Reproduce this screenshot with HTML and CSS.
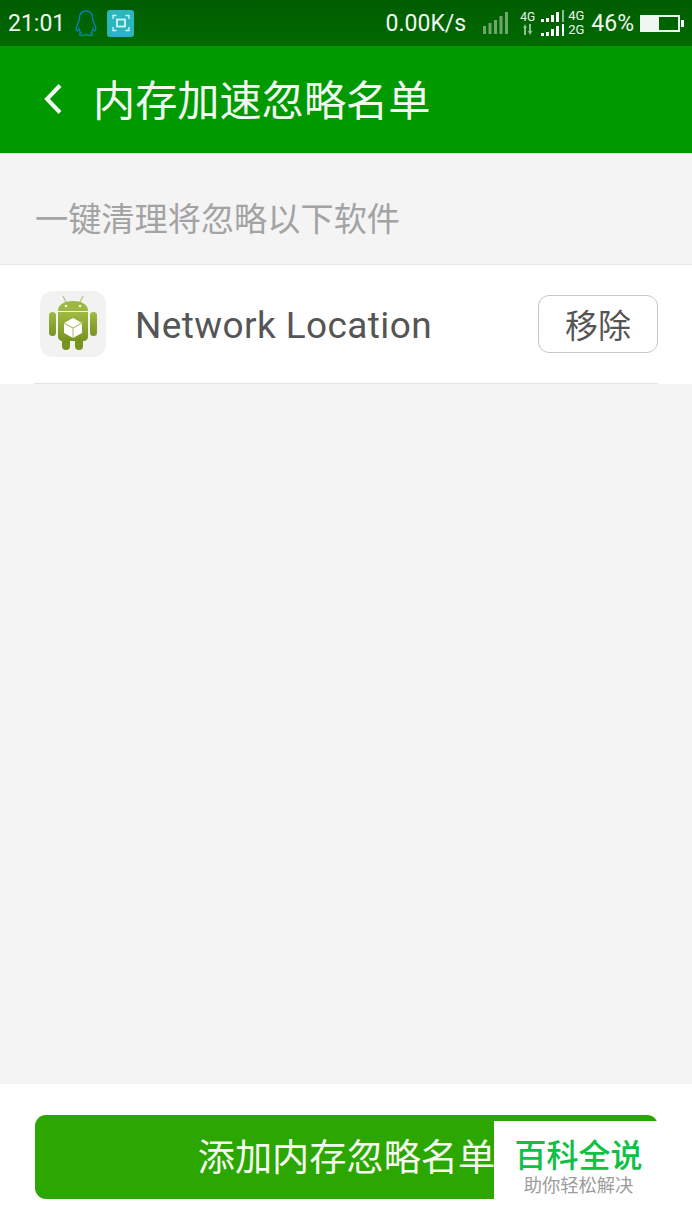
FILE: index.html
```html
<!DOCTYPE html>
<html lang="zh-CN">
<head>
  <meta charset="UTF-8">
  <meta name="viewport" content="width=device-width, initial-scale=1.0">
  <title>内存加速忽略名单</title>
  <link rel="stylesheet" href="styles.css">
</head>
<body>
  <div class="status-bar">
    <span class="clock">21:01</span>
    <svg class="qq-icon" width="24" height="28" viewBox="0 0 24 28" fill="none" stroke="#0a7fb0" stroke-width="1.5">
      <path d="M12 2C7.5 2 5.5 5.5 5.5 9.5C5.5 11 5 12 3.8 14.5C2.5 17.5 1.5 20.5 2.8 21.5C3.6 22 4.5 21 5 20C5.3 22 6 23 7 24C5.5 24.5 5 25.5 6 26C7.5 26.7 10.5 26.5 12 25.3C13.500 26.500 16.500 26.700 18 26C19 25.500 18.500 24.500 17 24C18 23 18.700 22 19 20C19.500 21 20.400 22 21.200 21.500C22.500 20.500 21.500 17.500 20.200 14.500C19 12 18.500 11 18.500 9.500C18.500 5.500 16.500 2 12 2Z"/>
    </svg>
    <span class="scan-icon">
      <svg width="20" height="20" viewBox="0 0 20 20" fill="none" stroke="#d8f4f4" stroke-width="1.3">
        <path d="M2 6V2.500H5.500M14.500 2.500H18V6M18 14V17.500H14.500M5.500 17.500H2V14"/>
        <rect x="6" y="6.500" width="8" height="7" stroke-width="1.800"/>
      </svg>
    </span>
    <span class="speed">0.00K/s</span>
    <svg class="signal-main" width="26" height="24" viewBox="0 0 26 24" fill="#6fa66f">
      <rect x="0" y="15" width="3" height="8"/>
      <rect x="5.500" y="12" width="3" height="11"/>
      <rect x="11" y="9" width="3" height="14"/>
      <rect x="16.500" y="5" width="3" height="18"/>
      <rect x="22" y="1" width="3" height="22"/>
    </svg>
    <span class="net-label">
      <span>4G</span>
      <svg width="12" height="11" viewBox="0 0 12 11" fill="#8fbf8f"><path d="M3 0L5 4H4V11H2V4H1ZM7 0H9V7H10.500L8 11L5.800 7H7Z"/></svg>
    </span>
    <span class="sim-block">
      <span class="sim-row">
        <svg width="24" height="13" viewBox="0 0 24 13" fill="#fff"><rect x="0" y="9" width="3" height="3"/><rect x="5" y="8" width="3" height="4"/><rect x="10" y="5" width="3" height="7"/><rect x="15" y="2" width="3" height="10"/><rect x="21" y="0" width="2" height="12" fill="#8fbf8f"/></svg>
        <span>4G</span>
      </span>
      <span class="sim-row">
        <svg width="24" height="13" viewBox="0 0 24 13" fill="#fff"><rect x="0" y="9" width="3" height="3"/><rect x="5" y="8" width="3" height="4"/><rect x="10" y="5" width="3" height="7"/><rect x="15" y="2" width="3" height="10"/><rect x="21" y="0" width="2" height="12"/></svg>
        <span>2G</span>
      </span>
    </span>
    <span class="battery-pct">46%</span>
    <span class="battery"><span class="battery-fill"></span></span>
  </div>

  <header class="title-bar">
    <svg class="back-icon" width="20" height="32" viewBox="0 0 20 32" fill="none" stroke="#f2fbf2" stroke-width="4">
      <path d="M17 2.500L4 16L17 29.500"/>
    </svg>
    <h1>内存加速忽略名单</h1>
  </header>

  <div class="section-label">一键清理将忽略以下软件</div>

  <div class="app-list">
    <div class="app-row">
      <span class="app-icon">
        <svg width="50" height="58" viewBox="0 0 50 58">
          <defs>
            <linearGradient id="droid" x1="0" y1="0" x2="0" y2="1">
              <stop offset="0" stop-color="#a0b944"/>
              <stop offset="1" stop-color="#76941f"/>
            </linearGradient>
          </defs>
          <path d="M15 1L18 7M35 1L32 7" stroke="#b4c48c" stroke-width="1.300" fill="none"/>
          <path d="M10 16C10 9 17 6 25 6C33 6 40 9 40 16Z" fill="#9db742"/>
          <circle cx="18" cy="11" r="1.300" fill="#f4f6e6"/>
          <circle cx="32" cy="11" r="1.300" fill="#f4f6e6"/>
          <rect x="1" y="17" width="7" height="24" rx="3.500" fill="url(#droid)"/>
          <rect x="42" y="17" width="7" height="24" rx="3.500" fill="url(#droid)"/>
          <path d="M10 17H40V42C40 44 38 46 36 46H14C12 46 10 44 10 42Z" fill="url(#droid)"/>
          <rect x="14" y="43" width="8" height="12" rx="4" fill="#76941f"/>
          <rect x="27" y="43" width="8" height="12" rx="4" fill="#76941f"/>
          <path d="M25 23L34 28V38L25 43L16 38V28Z" fill="#fff"/>
          <path d="M16 28L25 33L34 28M25 33V43" stroke="#b0c477" stroke-width="1.100" fill="none"/>
        </svg>
      </span>
      <span class="app-name">Network Location</span>
      <button class="remove-btn">移除</button>
    </div>
  </div>

  <div class="spacer"></div>

  <div class="bottom-bar">
    <button class="add-btn">添加内存忽略名单</button>
  </div>

  <div class="watermark">
    <div class="watermark-title">百科全说</div>
    <div class="watermark-sub">助你轻松解决</div>
  </div>
</body>
</html>
```

FILE: styles.css
```css
html, body {
  margin: 0;
  padding: 0;
}

body {
  position: relative;
  display: flex;
  flex-direction: column;
  width: 692px;
  height: 1230px;
  overflow: hidden;
  background: #f4f4f4;
  font-family: "Noto Sans CJK SC", "Noto Sans", sans-serif;
  color: #555;
}

.status-bar {
  display: flex;
  align-items: center;
  flex: none;
  height: 46px;
  padding: 0 7px 0 8px;
  box-sizing: border-box;
  background: linear-gradient(#005c00, #006a00);
  color: #f0f6f0;
  font-family: Roboto, sans-serif;
}

.clock {
  font-size: 23px;
}

.qq-icon {
  margin-left: 9px;
}

.scan-icon {
  display: flex;
  align-items: center;
  justify-content: center;
  width: 27px;
  height: 27px;
  margin-left: 9px;
  border-radius: 3px;
  background: #2ab5c0;
}

.speed {
  margin-left: auto;
  font-size: 23px;
}

.signal-main {
  margin-left: 17px;
}

.net-label {
  display: flex;
  flex-direction: column;
  align-items: center;
  margin-left: 11px;
  font-size: 12px;
  line-height: 13px;
}

.sim-block {
  display: flex;
  flex-direction: column;
  margin-left: 6px;
}

.sim-row {
  display: flex;
  align-items: center;
  gap: 3px;
  font-size: 13px;
  line-height: 14px;
}

.battery-pct {
  margin-left: 7px;
  font-size: 23px;
}

.battery {
  position: relative;
  width: 36px;
  height: 13px;
  margin: 0 5px 0 6px;
  border: 2px solid #f0f6f0;
}

.battery::after {
  content: "";
  position: absolute;
  top: 3px;
  right: -6px;
  width: 3px;
  height: 7px;
  background: #f0f6f0;
}

.battery-fill {
  display: block;
  width: 46%;
  height: 100%;
  background: #f0f6f0;
}

.title-bar {
  display: flex;
  align-items: center;
  flex: none;
  height: 108px;
  padding: 0 0 2px 43px;
  box-sizing: border-box;
  background: #009900;
  border-bottom: 1px solid #e4e4e4;
  color: #f2fbf2;
}

.title-bar h1 {
  margin: 0 0 0 30px;
  font-size: 42.2px;
  font-weight: 400;
  line-height: 1;
}

.back-icon {
  flex: none;
}

.section-label {
  flex: none;
  height: 111px;
  padding-left: 35px;
  box-sizing: border-box;
  border-bottom: 1px solid #e8e8e8;
  font-size: 33.2px;
  line-height: 125px;
  color: #a3a3a3;
}

.app-list {
  flex: none;
  padding: 0 34px;
  background: #fff;
}

.app-row {
  display: flex;
  align-items: center;
  height: 119px;
  box-sizing: border-box;
  border-bottom: 1px solid #e4e4e4;
}

.app-icon {
  display: flex;
  align-items: center;
  justify-content: center;
  flex: none;
  width: 66px;
  height: 66px;
  margin-left: 6px;
  border-radius: 13px;
  background: #f2f2f2;
}

.app-name {
  margin: 3px 0 0 29px;
  font-family: Roboto, sans-serif;
  font-size: 37px;
  letter-spacing: 0.4px;
}

.remove-btn {
  width: 120px;
  height: 58px;
  margin-left: auto;
  padding: 0;
  border: 1.5px solid #c8c8c8;
  border-radius: 11px;
  background: #fff;
  font-family: inherit;
  font-size: 33px;
  line-height: 1;
  color: #555;
}

.spacer {
  flex: 1;
}

.bottom-bar {
  flex: none;
  height: 146px;
  padding: 31px 34px 0 35px;
  box-sizing: border-box;
  background: #fff;
}

.add-btn {
  display: block;
  width: 100%;
  height: 84px;
  padding: 0 0 3px;
  border: none;
  border-radius: 11px;
  background: #2ca600;
  font-family: inherit;
  font-size: 37.2px;
  line-height: 1;
  color: #f4fbf0;
}

.watermark {
  position: absolute;
  left: 494px;
  top: 1121px;
  width: 174px;
  height: 84px;
  padding: 14px 5px 0 0;
  box-sizing: border-box;
  background: #fff;
  text-align: center;
}

.watermark-title {
  font-size: 32px;
  font-weight: 500;
  line-height: 36px;
  color: #0fc045;
}

.watermark-sub {
  font-size: 18.3px;
  line-height: 26px;
  color: #9c9c9c;
}
```
